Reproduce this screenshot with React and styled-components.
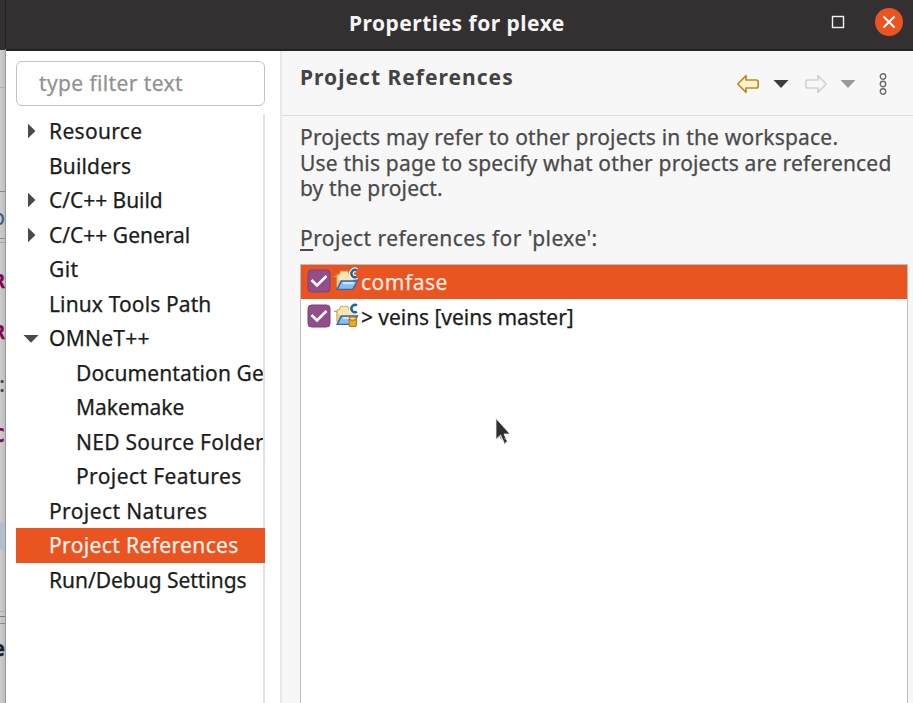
import React from "react";
import styled, { createGlobalStyle, css } from "styled-components";

const Global = createGlobalStyle`
  * { box-sizing: border-box; }
  html, body { margin: 0; overflow: hidden; }
  body {
    font: 21px/34.5px "Noto Sans", "Open Sans", sans-serif; color: #1c1c1c;
    -webkit-text-stroke: 0.25px currentColor;
  }
`;
const Screen = styled.div`
  width: 913px; height: 703px; display: flex; overflow: hidden; background: #f7f7f7;
`;
const Backdrop = styled.div`
  width: 6px; flex: none; display: flex; flex-direction: column; overflow: hidden;
  background: linear-gradient(90deg, #cdcdcd, #bebebe);
  border-style: solid; border-width: 0 1px 0 0;
  border-image: linear-gradient(#242223 50px, #999 50px) 1;
`;
const Strip = styled.div`
  flex: none; height: ${p => p.$h}px; background: ${p => p.$bg || "transparent"};
  border-top: ${p => (p.$line ? `1px solid ${p.$line}` : "0")};
`;
const Snippet = styled.div`
  flex: none; height: 20px; display: flex; justify-content: flex-end;
  font: ${p => (p.$mono ? `700 20px/20px "DejaVu Sans Mono", monospace` : `${p.$bold ? 700 : 400} 21px/20px "Noto Sans", sans-serif`)};
  color: ${p => p.$color};
`;
const Dialog = styled.div`
  flex: 1; min-width: 0; display: flex; flex-direction: column; background: #f7f7f7;
`;
const TitleBar = styled.header`
  height: 51px; flex: none; display: grid; grid-template-columns: 1fr 82px; align-items: center;
  background: #333031; border-bottom: 2px solid #242223; color: #f5f5f5;
`;
const Label = styled.span`
  white-space: pre; letter-spacing: ${p => p.$ls || 0}px;
`;
const Title = styled.div`
  font-weight: 700; font-size: 21px; padding: 0 0 3px 343px; line-height: 46px;
  -webkit-text-stroke: 0;
`;
const WindowButtons = styled.div`
  display: flex; align-items: center; gap: 30px; padding-bottom: 5px;
`;
const Body = styled.div`
  flex: 1; min-height: 0; display: flex;
`;
const Sidebar = styled.aside`
  width: 276px; flex: none; padding: 10px 16px 0 10px; background: #fff;
  border-right: 2px solid #e8e8e8; display: flex; flex-direction: column;
`;
const Filter = styled.div`
  height: 45px; flex: none; margin-right: -1px; border: 1.5px solid #c2c2c2; border-radius: 6px;
  padding-left: 22px; line-height: 43px; color: #929292;
`;
const Tree = styled.div`
  flex: 1; margin-top: 8px; margin-right: -1px; border-right: 2px solid #e2e2e2;
`;
const TreeRow = styled.div`
  height: 34.5px; display: flex; align-items: center; white-space: nowrap;
  padding-left: ${p => (p.$child ? 60 : 33)}px; overflow: hidden;
  ${p => p.$selected && css`background: #e95420; color: #fdf1ec; margin-right: -2px;`}
`;
const Expander = styled.svg`
  width: 16px; height: 16px; flex: none; margin-left: -26px; margin-right: 10px; fill: #4a4a4a;
`;
const Page = styled.main`
  flex: 1; min-width: 0; display: flex; flex-direction: column; color: #4a4a4a;
`;
const PageHeader = styled.div`
  height: 65px; flex: none; display: flex; justify-content: space-between;
  border-bottom: 1.5px solid #dedede; padding: 0 25px 0 18px;
`;
const Heading = styled.h1`
  margin: 0; font-size: 21px; font-weight: 700; line-height: 34px; padding-top: 9px; color: #434343;
  -webkit-text-stroke: 0;
`;
const Toolbar = styled.div`
  display: flex; align-items: center; padding-top: 1px;
`;
const ToolIcon = styled.svg`
  width: ${p => p.$w}px; height: 24px; display: block; margin-left: ${p => p.$gap || 0}px;
`;
const Description = styled.div`
  padding: 9px 0 0 18px; line-height: 25.5px; display: flex; flex-direction: column;
`;
const ListLabel = styled.div`
  padding: 19px 0 0 18px; height: 62px; flex: none;
  u { text-decoration-thickness: 1.5px; text-underline-offset: 3px; text-decoration-skip-ink: none; }
`;
const List = styled.div`
  flex: 1; margin: 0 5px 0 18px; border: 1.5px solid #bdbdbd; border-bottom: 0; background: #fff;
`;
const ListRow = styled.div`
  height: 34.5px; display: flex; align-items: center; padding-left: 6px; color: #1c1c1c;
  ${p => p.$selected && css`background: #e95420; color: #fdeae2;`}
`;
const RowText = styled(Label)`
  padding-top: 1px;
`;
const Check = styled.svg`
  width: 24px; height: 24px; flex: none; margin: -1px 2px 0 0;
`;
const Folder = styled.svg`
  width: 26px; height: 27px; flex: none; margin: -4px 2px 0 0;
`;
const Pointer = styled.svg`
  position: absolute; left: 494px; top: 417px; width: 18px; height: 30px;
`;

const tree = [
  { text: "Resource", ls: 0.32, kind: "closed" },
  { text: "Builders", ls: 0.15 },
  { text: "C/C++ Build", ls: -0.05, kind: "closed" },
  { text: "C/C++ General", ls: 0, kind: "closed" },
  { text: "Git", ls: 0.4 },
  { text: "Linux Tools Path", ls: 0.12 },
  { text: "OMNeT++", ls: 0.25, kind: "open" },
  { text: "Documentation Ge", ls: 0.11, kind: "child" },
  { text: "Makemake", ls: 0, kind: "child" },
  { text: "NED Source Folder", ls: 0.25, kind: "child" },
  { text: "Project Features", ls: 0.4, kind: "child" },
  { text: "Project Natures", ls: 0.4 },
  { text: "Project References", ls: 0.37, kind: "selected" },
  { text: "Run/Debug Settings", ls: -0.03 },
];

const CheckMark = () => (
  <Check viewBox="0 0 24 24">
    <rect x="1" y="1" width="22" height="22" rx="3.5" fill="#924d8b" stroke="#7f4076" />
    <path d="M4.5 11 10 16.5 19.5 7" fill="none" stroke="#fff" strokeWidth="2.6" />
  </Check>
);

const ProjectIcon = ({ repo }) => (
  <Folder viewBox="0 0 25 26">
    <path d="M1 10h3v9.500" fill="none" stroke="#c3a06a" strokeWidth="1.4" />
    <path d="M4 21V8.500h2L7.500 5h6.500l1.500 3.500h4V14" fill="#f8e5b0" stroke="#cfae6c" />
    <path d="M4 21V12l4 2.500z" fill="#eecb7b" />
    <path d="M8 14.500h15.500L19 22.500H4z" fill="#86bdf2" stroke="#3866b0" strokeWidth="1.4" />
    <path d="M9.500 16.500H20" stroke="#d4e9ff" strokeWidth="2" />
    <path d="M23 4.300a3.500 3.500 0 1 0 0 6" fill="none" stroke="#f8f6ee" strokeWidth="4.600" />
    <path d="M23 4.300a3.500 3.500 0 1 0 0 6" fill="none" stroke="#1f6796" strokeWidth="2.300" />
    {repo && (
      <>
        <path d="M15.500 17v6c0 2.200 7 2.200 7 0v-6" fill="#f0a52c" stroke="#b97310" />
        <ellipse cx="19" cy="16.900" rx="3.500" ry="1.600" fill="#fbdc83" stroke="#b97310" />
      </>
    )}
  </Folder>
);

const HistoryArrow = ({ forward }) => (
  <g transform={forward ? "translate(24 0) scale(-1 1)" : undefined}>
    <path
      d="M1.800 12 10 3.700V8h10.200q2 0 2 2v4q0 2-2 2H10v4.300z"
      fill={forward ? "#f8f8f8" : "#fff5cd"}
      stroke={forward ? "#d2d2d2" : "#c28a22"}
      strokeWidth="1.7"
      strokeLinejoin="round"
    />
  </g>
);

export default function App() {
  return (
    <Screen>
      <Global />
      <Backdrop>
        <Strip $h={50} $bg="#333031" />
        <Strip $h={37} />
        <Strip $h={104} $line="#b0b0b0" />
        <Strip $h={16} $line="#858585" />
        <Snippet $color="#35618c">o</Snippet>
        <Strip $h={11} />
        <Strip $h={4} $line="#8d8d8d" />
        <Strip $h={29} $line="#a5a5a5" />
        <Snippet $mono $color="#7d0a50">AR</Snippet>
        <Strip $h={31} />
        <Snippet $mono $color="#7d0a50">AR</Snippet>
        <Strip $h={32} />
        <Snippet $color="#4a4038">:</Snippet>
        <Strip $h={31} />
        <Snippet $mono $color="#7d0a50">AC</Snippet>
        <Strip $h={78} />
        <Strip $h={26} $bg="#b3bfcc" />
        <Strip $h={62} />
        <Strip $h={5} $line="#b0b0b0" />
        <Strip $h={7} $line="#7d7d7d" />
        <Strip $h={15} $line="#8d8d8d" />
        <Snippet $bold $color="#18222e">e</Snippet>
      </Backdrop>
      <Dialog>
        <TitleBar>
          <Title><Label $ls={0.48}>Properties for plexe</Label></Title>
          <WindowButtons>
            <svg width="14" height="14">
              <rect x="1.500" y="1.500" width="11" height="11" fill="none" stroke="#f2f2f2" strokeWidth="1.4" />
            </svg>
            <svg width="28" height="28">
              <circle cx="14" cy="14" r="14" fill="#e95420" />
              <path d="M8.500 8.500l11 11m0-11l-11 11" stroke="#fff" strokeWidth="2" />
            </svg>
          </WindowButtons>
        </TitleBar>
        <Body>
          <Sidebar>
            <Filter><Label $ls={0.38}>type filter text</Label></Filter>
            <Tree>
              {tree.map(({ text, ls, kind }) => (
                <TreeRow key={text} $child={kind === "child"} $selected={kind === "selected"}>
                  {kind === "closed" && <Expander viewBox="0 0 16 16"><path d="M5 .8l7.500 7.200L5 15.200z" /></Expander>}
                  {kind === "open" && <Expander viewBox="0 0 16 16"><path d="M.5 5h15L8 12.700z" /></Expander>}
                  <Label $ls={ls}>{text}</Label>
                </TreeRow>
              ))}
            </Tree>
          </Sidebar>
          <Page>
            <PageHeader>
              <Heading><Label $ls={1.02}>Project References</Label></Heading>
              <Toolbar>
                <ToolIcon $w={24} viewBox="0 0 24 24"><HistoryArrow /></ToolIcon>
                <ToolIcon $w={16} $gap={13} viewBox="0 0 16 24"><path d="M.5 8h15L8 16z" fill="#3c3c3c" /></ToolIcon>
                <ToolIcon $w={24} $gap={15} viewBox="0 0 24 24"><HistoryArrow forward /></ToolIcon>
                <ToolIcon $w={16} $gap={12} viewBox="0 0 16 24"><path d="M.5 8h15L8 16z" fill="#9a9a9a" /></ToolIcon>
                <ToolIcon $w={10} $gap={22} viewBox="0 0 10 24">
                  <g fill="#fafafa" stroke="#6b6b6b" strokeWidth="1.4">
                    <circle cx="5" cy="4.500" r="2.700" />
                    <circle cx="5" cy="12" r="2.700" />
                    <circle cx="5" cy="19.500" r="2.700" />
                  </g>
                </ToolIcon>
              </Toolbar>
            </PageHeader>
            <Description>
              <Label $ls={0.2}>Projects may refer to other projects in the workspace.</Label>
              <Label $ls={0.18}>Use this page to specify what other projects are referenced</Label>
              <Label $ls={0.12}>by the project.</Label>
            </Description>
            <ListLabel><Label $ls={0.43}><u>P</u>roject references for 'plexe':</Label></ListLabel>
            <List>
              <ListRow $selected><CheckMark /><ProjectIcon /><RowText $ls={0.5}>comfase</RowText></ListRow>
              <ListRow><CheckMark /><ProjectIcon repo /><RowText $ls={-0.05}>&gt; veins [veins master]</RowText></ListRow>
            </List>
          </Page>
        </Body>
      </Dialog>
      <Pointer viewBox="0 0 18 30">
        <path d="M2 1.500V22l4.500-4 4 8.500 3-1.500-3.500-8h6z" fill="#2f2f2f" stroke="#ededed" strokeWidth=".8" />
        <path d="M2.500 22l3-3.500 2 4M10 21l3 3-3 3" fill="none" stroke="#8b8b8b" strokeWidth="1" />
      </Pointer>
    </Screen>
  );
}
